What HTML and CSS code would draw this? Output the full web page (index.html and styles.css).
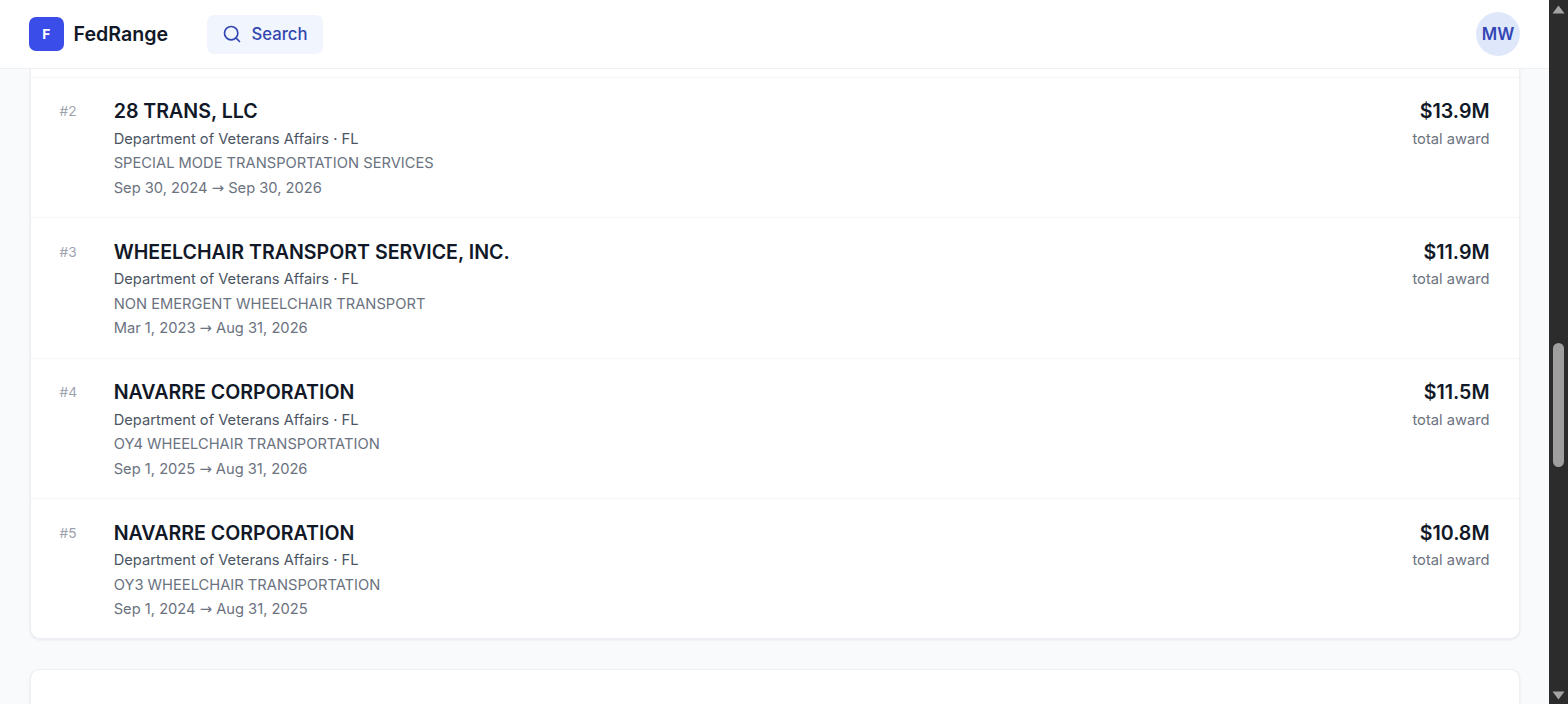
FILE: index.html
```html
<!DOCTYPE html>
<html lang="en">
<head>
<meta charset="utf-8">
<title>FedRange</title>
<link rel="stylesheet" href="styles.css">
</head>
<body>
<div class="app">
  <div class="page">
    <header class="topbar">
      <div class="brand"><span class="logo">F</span><span class="brand-name">FedRange</span></div>
      <button class="search"><svg class="search-icon" viewBox="0 0 24 24" fill="none" stroke="currentColor" stroke-width="2" stroke-linecap="round" stroke-linejoin="round"><circle cx="11" cy="11" r="8"/><path d="m21 21-4.3-4.3"/></svg><span>Search</span></button>
      <div class="avatar">MW</div>
    </header>
    <main class="content">
      <section class="card list">
        <div class="row-clip"></div>
        <article class="row">
          <div class="rank">#2</div>
          <div class="info"><h3 class="name">28 TRANS, LLC</h3><div class="agency">Department of Veterans Affairs · FL</div><div class="desc">SPECIAL MODE TRANSPORTATION SERVICES</div><div class="dates">Sep 30, 2024 <span class="to">→</span> Sep 30, 2026</div></div>
          <div class="award"><div class="amount">$13.9M</div><div class="award-label">total award</div></div>
        </article>
        <article class="row">
          <div class="rank">#3</div>
          <div class="info"><h3 class="name">WHEELCHAIR TRANSPORT SERVICE, INC.</h3><div class="agency">Department of Veterans Affairs · FL</div><div class="desc">NON EMERGENT WHEELCHAIR TRANSPORT</div><div class="dates">Mar 1, 2023 <span class="to">→</span> Aug 31, 2026</div></div>
          <div class="award"><div class="amount">$11.9M</div><div class="award-label">total award</div></div>
        </article>
        <article class="row">
          <div class="rank">#4</div>
          <div class="info"><h3 class="name">NAVARRE CORPORATION</h3><div class="agency">Department of Veterans Affairs · FL</div><div class="desc">OY4 WHEELCHAIR TRANSPORTATION</div><div class="dates">Sep 1, 2025 <span class="to">→</span> Aug 31, 2026</div></div>
          <div class="award"><div class="amount">$11.5M</div><div class="award-label">total award</div></div>
        </article>
        <article class="row">
          <div class="rank">#5</div>
          <div class="info"><h3 class="name">NAVARRE CORPORATION</h3><div class="agency">Department of Veterans Affairs · FL</div><div class="desc">OY3 WHEELCHAIR TRANSPORTATION</div><div class="dates">Sep 1, 2024 <span class="to">→</span> Aug 31, 2025</div></div>
          <div class="award"><div class="amount">$10.8M</div><div class="award-label">total award</div></div>
        </article>
      </section>
      <section class="card next"></section>
    </main>
  </div>
  <aside class="scrollbar">
    <svg class="arrow arrow-up" viewBox="0 0 13 9"><path d="M6.5.5 12.5 8.5H.5z" fill="#a3a3a3"/></svg>
    <div class="track"><div class="thumb"></div></div>
    <svg class="arrow arrow-down" viewBox="0 0 13 9"><path d="M6.5 8.5 12.5.5H.5z" fill="#a3a3a3"/></svg>
  </aside>
</div>
</body>
</html>
```
FILE: styles.css
```css
* { box-sizing: border-box; }
html, body { margin: 0; height: 100%; overflow: hidden; }
body { font-family: Inter, "Liberation Sans", sans-serif; background: #f8fafc; color: #111827; }
.app { display: flex; height: 704px; }
.page { flex: 1; min-width: 0; display: flex; flex-direction: column; height: 704px; overflow: hidden; }
.topbar { flex: none; height: 69px; display: flex; align-items: center; padding: 0 29px 0 29px; background: #fff; border-bottom: 1px solid #eef0f3; }
.brand { display: flex; align-items: center; gap: 10px; }
.logo { width: 34.5px; height: 34.5px; border-radius: 7px; background: #3b4de8; color: #fff; font-size: 13.7px; font-weight: 700; display: flex; align-items: center; justify-content: center; }
.brand-name { font-size: 19.6px; font-weight: 600; color: #111827; }
.search { margin-left: 39.5px; height: 39px; width: 116px; display: flex; align-items: center; gap: 9.5px; padding: 0 14.5px; border: 0; border-radius: 7px; background: #f1f5fd; color: #3347b0; font: 500 16.7px Inter, sans-serif; }
.search-icon { width: 20px; height: 20px; flex: none; }
.avatar { margin-left: auto; width: 44px; height: 44px; border-radius: 50%; background: #dfe8fb; color: #3345b5; font-size: 16.7px; font-weight: 600; display: flex; align-items: center; justify-content: center; }
.content { flex: 1; min-height: 0; overflow: hidden; padding: 0 29.5px 0 30px; display: flex; flex-direction: column; gap: 30px; }
.card { flex: none; background: #fff; border: 1px solid #eef0f3; border-radius: 10px; box-shadow: 0 1px 3px rgba(15, 23, 42, 0.08); }
.list { border-top: 0; border-top-left-radius: 0; border-top-right-radius: 0; }
.next { height: 60px; }
.row-clip { height: 8.5px; border-bottom: 1px solid #f5f6f8; }
.row { height: 140.5px; display: flex; align-items: flex-start; padding: 20.5px 29px 0 28.5px; border-bottom: 1px solid #f5f6f8; }
.row:last-child { border-bottom: 0; height: 139px; }
.rank { width: 54.2px; flex: none; margin-top: 0.3px; font-size: 13.7px; line-height: 27.5px; color: #9ca3af; }
.info { flex: 1; min-width: 0; }
.name { margin: 0 0 2.5px; font-size: 19.6px; line-height: 26px; font-weight: 600; color: #111827; }
.agency, .desc, .dates, .award-label { font-size: 14.7px; line-height: 24.5px; }
.agency { color: #4b5563; }
.desc, .dates, .award-label { color: #6b7280; }
.to { font-family: "DejaVu Sans", sans-serif; font-size: 14.7px; line-height: 1; }
.award { text-align: right; }
.amount { font-size: 19.6px; line-height: 26px; font-weight: 600; color: #111827; margin-bottom: 2.5px; }
.scrollbar { flex: none; width: 19px; background: #2c2c2c; display: flex; flex-direction: column; align-items: center; }
.arrow { flex: none; width: 13px; height: 9px; }
.arrow-up { margin: 5px 0 3px; }
.arrow-down { margin: 3px 0 4px; }
.track { flex: 1; width: 100%; display: flex; flex-direction: column; align-items: center; padding-top: 326px; }
.thumb { width: 11px; height: 124px; border-radius: 6px; background: #9f9f9f; }
```
